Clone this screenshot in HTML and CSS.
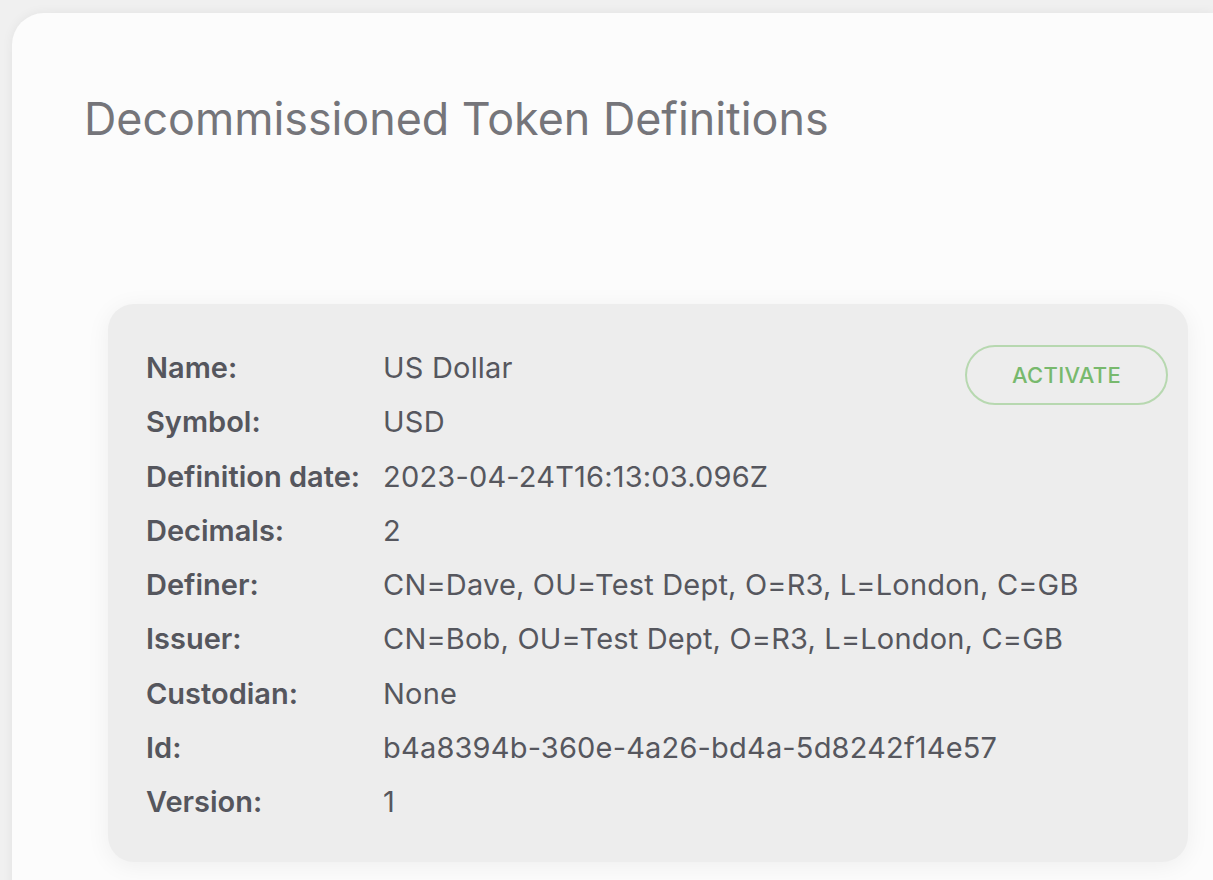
FILE: index.html
```html
<!DOCTYPE html>
<html lang="en">
<head>
<meta charset="utf-8">
<title>Decommissioned Token Definitions</title>
<link rel="stylesheet" href="styles.css">
</head>
<body>
<main class="panel">
  <h1 class="title">Decommissioned Token Definitions</h1>
  <section class="card">
    <dl class="details">
      <dt>Name:</dt><dd>US Dollar</dd>
      <dt>Symbol:</dt><dd>USD</dd>
      <dt>Definition date:</dt><dd>2023-04-24T16:13:03.096Z</dd>
      <dt>Decimals:</dt><dd>2</dd>
      <dt>Definer:</dt><dd>CN=Dave, OU=Test Dept, O=R3, L=London, C=GB</dd>
      <dt>Issuer:</dt><dd>CN=Bob, OU=Test Dept, O=R3, L=London, C=GB</dd>
      <dt>Custodian:</dt><dd>None</dd>
      <dt>Id:</dt><dd>b4a8394b-360e-4a26-bd4a-5d8242f14e57</dd>
      <dt>Version:</dt><dd>1</dd>
    </dl>
    <button class="activate" type="button">ACTIVATE</button>
  </section>
</main>
</body>
</html>
```
FILE: styles.css
```css
html, body {
  margin: 0;
  padding: 0;
  height: 100%;
  overflow: hidden;
}
body {
  background: #f0f0f0;
  font-family: Inter, "Noto Sans", sans-serif;
  padding: 13px 0 0 12px;
  box-sizing: border-box;
}
.panel {
  background: #fcfcfc;
  border-radius: 32px 0 0 0;
  box-shadow: 0 0 12px rgba(0,0,0,0.06);
  padding: 78px 0 0 72px;
  min-height: 1000px;
  box-sizing: border-box;
}
.title {
  margin: 0;
  font-weight: 400;
  font-size: 44.8px;
  line-height: 56px;
  color: #75757a;
}
.card {
  margin: 157px 25px 0 24px;
  background: #ededed;
  border-radius: 26px;
  box-shadow: 0 4px 24px rgba(0,0,0,0.06);
  padding: 37px 20px 32px 38px;
  display: grid;
  grid-template-columns: 1fr auto;
  width: 1080px;
  box-sizing: border-box;
}
.details {
  grid-area: 1 / 1 / 2 / 3;
  margin: 0;
  display: grid;
  grid-template-columns: max-content 1fr;
  column-gap: 23px;
  font-size: 29px;
  line-height: 54.3px;
}
.details dt {
  font-weight: 600;
  color: #55565d;
}
.details dd {
  margin: 0;
  color: #56575e;
  letter-spacing: 0.18px;
}
.activate {
  grid-area: 1 / 2 / 2 / 3;
  align-self: start;
  justify-self: end;
  margin-top: 4px;
  font-family: inherit;
  background: transparent;
  border: 2px solid #b7d8b0;
  border-radius: 30px;
  width: 203px;
  height: 60px;
  color: #78b96d;
  font-size: 22px;
  font-weight: 500;
  letter-spacing: 0.3px;
}
```
